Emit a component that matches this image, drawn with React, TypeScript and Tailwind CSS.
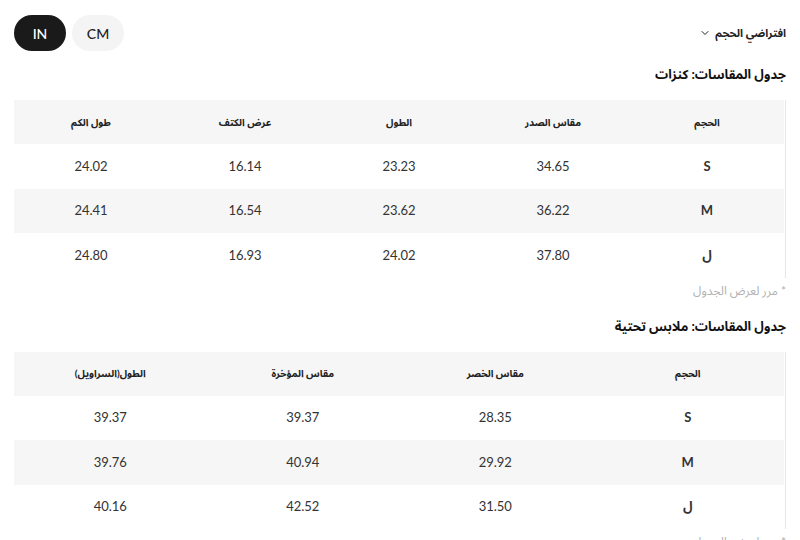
import React, { useState } from 'react';
import { ChevronDown } from 'lucide-react';

const tops = {
  title: 'جدول المقاسات: كنزات',
  headers: ['الحجم', 'مقاس الصدر', 'الطول', 'عرض الكتف', 'طول الكم'],
  rows: [
    ['S', '34.65', '23.23', '16.14', '24.02'],
    ['M', '36.22', '23.62', '16.54', '24.41'],
    ['ل', '37.80', '24.02', '16.93', '24.80'],
  ],
};

const bottoms = {
  title: 'جدول المقاسات: ملابس تحتية',
  headers: ['الحجم', 'مقاس الخصر', 'مقاس المؤخرة', 'الطول(السراويل)'],
  rows: [
    ['S', '28.35', '39.37', '39.37'],
    ['M', '29.92', '40.94', '39.76'],
    ['ل', '31.50', '42.52', '40.16'],
  ],
};

const SizeTable = ({ data }: { data: typeof tops }) => (
  <div>
    <h2 className="text-[13px] font-bold text-[#111] leading-6">{data.title}</h2>
    <div className="mt-[14px] pr-px border-r border-[#e6e6e6]">
      <table className="w-full table-fixed border-collapse">
        <thead>
          <tr className="h-[44px] bg-[#f6f6f6]">
            {data.headers.map((h) => (
              <th key={h} className="text-[10px] font-bold text-[#222]">{h}</th>
            ))}
          </tr>
        </thead>
        <tbody>
          {data.rows.map((row, i) => (
            <tr key={i} className={`h-[44.5px] ${i === 1 ? 'bg-[#f6f6f6]' : 'bg-white'}`}>
              {row.map((cell, j) => (
                <td
                  key={j}
                  className={`text-center text-[13px] text-[#333] ${j === 0 ? 'font-bold text-[#222]' : ''}`}
                >
                  {cell}
                </td>
              ))}
            </tr>
          ))}
        </tbody>
      </table>
    </div>
    <p className="mt-[5px] text-[12px] leading-4 text-[#b0b0b0]">* مرر لعرض الجدول</p>
  </div>
);

export default function App() {
  const [unit, setUnit] = useState<'IN' | 'CM'>('IN');

  return (
    <div
      dir="rtl"
      className="w-[800px] h-[540px] overflow-hidden bg-white px-[14px] pt-[15px]"
      style={{ fontFamily: "Lato, 'Noto Sans Arabic', 'DejaVu Sans', sans-serif" }}
    >
      <div className="flex items-center justify-between">
        <button className="flex items-center gap-1 text-[11px] font-bold text-[#222]">
          افتراضي الحجم
          <ChevronDown className="w-3 h-3" strokeWidth={2} />
        </button>
        <div dir="ltr" className="flex gap-[6px]">
          {(['IN', 'CM'] as const).map((u) => (
            <button
              key={u}
              onClick={() => setUnit(u)}
              className={`w-[52px] h-[36px] rounded-full text-[14px] font-medium ${
                unit === u ? 'bg-[#1a1a1a] text-white' : 'bg-[#f4f4f4] text-[#222]'
              }`}
            >
              {u}
            </button>
          ))}
        </div>
      </div>

      <div className="mt-[11px]">
        <SizeTable data={tops} />
      </div>
      <div className="mt-[15px]">
        <SizeTable data={bottoms} />
      </div>
    </div>
  );
}
